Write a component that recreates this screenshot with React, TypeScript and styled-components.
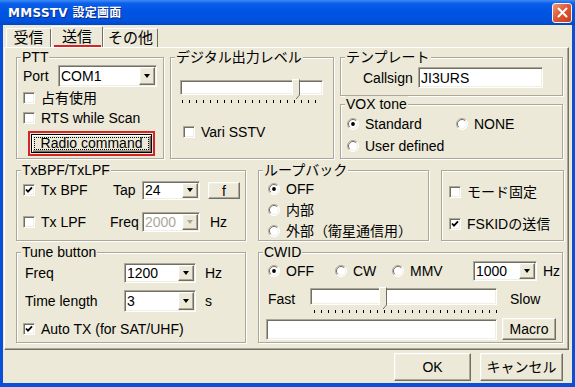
import React from 'react';
import styled, { createGlobalStyle, css } from 'styled-components';

const palette = {
  face: '#ece9d8',
  light: '#f1efe2',
  shadow: '#aca899',
  dark: '#716f64',
  white: '#ffffff',
  frame: '#0a4fd8',
  red: '#d42426',
};

const GlobalStyle = createGlobalStyle`
  html, body { margin: 0; padding: 0; }
  body {
    width: 575px;
    height: 387px;
    overflow: hidden;
    font-family: "Liberation Sans", "Noto Sans CJK JP", sans-serif;
    font-size: 14px;
    line-height: 16px;
    color: #000;
  }
  * { box-sizing: border-box; }
`;

const sunken = css`
  border: 1px solid;
  border-color: ${palette.shadow} ${palette.white} ${palette.white} ${palette.shadow};
  box-shadow: inset 1px 1px 0 ${palette.dark}, inset -1px -1px 0 ${palette.light};
  padding: 1px;
`;

const raised = css`
  border: 1px solid;
  border-color: ${palette.white} ${palette.dark} ${palette.dark} ${palette.white};
  box-shadow: inset -1px -1px 0 ${palette.shadow}, inset 1px 1px 0 ${palette.light};
`;

const Window = styled.div`
  width: 575px;
  height: 387px;
  display: flex;
  flex-direction: column;
  background: ${palette.frame};
`;

const TitleBar = styled.div`
  height: 25px;
  flex: none;
  display: flex;
  align-items: center;
  justify-content: space-between;
  padding: 0 3px 0 8px;
  background: linear-gradient(to bottom, #3d8cf7 0%, #0b5fe9 14%, #0054e3 45%, #0152dd 85%, #0046c4 100%);
`;

const Title = styled.span`
  color: #fff;
  font-family: "DejaVu Sans", "Noto Sans CJK JP", sans-serif;
  font-weight: bold;
  font-size: 12px;
  letter-spacing: 0.3px;
  text-shadow: 1px 1px 0 #0a2a8a;
`;

const CloseButton = styled.div`
  width: 20px;
  height: 20px;
  border: 1px solid #f4f4f4;
  border-radius: 3px;
  background: linear-gradient(135deg, #ec9a7c 0%, #df5a36 45%, #c83c18 100%);
  display: flex;
  align-items: center;
  justify-content: center;
`;

const Client = styled.div`
  flex: 1;
  margin: 0 3px 4px 3px;
  background: ${palette.face};
  display: flex;
  flex-direction: column;
`;

const TabStrip = styled.div`
  height: 22px;
  flex: none;
  display: flex;
  align-items: flex-end;
  padding-left: 3px;
`;

const Tab = styled.div<{ $active?: boolean; $w: number }>`
  position: relative;
  width: ${p => p.$w}px;
  height: ${p => (p.$active ? 21 : 19)}px;
  display: flex;
  align-items: center;
  justify-content: center;
  font-size: 15px;
  border-left: 1px solid ${palette.white};
  border-top: 1px solid ${palette.white};
  border-right: 1px solid ${palette.dark};
  border-radius: 2px 2px 0 0;
  ${p =>
    p.$active &&
    css`
      &::after {
        content: '';
        position: absolute;
        left: 2px;
        right: 1px;
        bottom: 0;
        height: 2px;
        background: ${palette.red};
      }
    `}
`;

const Panel = styled.div`
  flex: none;
  height: 303px;
  margin: 0 3px 0 1px;
  border: 1px solid;
  border-color: ${palette.white} ${palette.dark} ${palette.dark} ${palette.white};
  box-shadow: inset -1px -1px 0 ${palette.shadow};
  padding: 1px 0 0 11px;
  display: flex;
  flex-direction: column;
  gap: 3px;
`;

const Row = styled.div<{ $gap: number }>`
  display: flex;
  align-items: flex-start;
  gap: ${p => p.$gap}px;
`;

const Column = styled.div`
  display: flex;
  flex-direction: column;
`;

const Group = styled.fieldset<{ $w: number; $h: number }>`
  width: ${p => p.$w}px;
  height: ${p => p.$h}px;
  margin: 0;
  padding: 0;
  min-width: 0;
  border: 1px solid ${palette.shadow};
  box-shadow: inset 1px 1px 0 ${palette.white}, 1px 1px 0 ${palette.white};
  display: flex;
  flex-direction: column;
  flex: none;
`;

const Legend = styled.legend<{ $blank?: boolean }>`
  padding: 0 1px;
  margin-left: 4px;
  height: 16px;
  line-height: 16px;
  background: ${palette.face};
  white-space: nowrap;
  ${p => p.$blank && css`width: 0; padding: 0;`}
`;

const GroupBody = styled.div<{ $pl?: number }>`
  display: flex;
  flex-direction: column;
  padding-left: ${p => p.$pl ?? 6}px;
`;

const Line = styled.div<{ $h: number; $mt?: number; $ml?: number }>`
  display: flex;
  align-items: center;
  flex: none;
  height: ${p => p.$h}px;
  margin-top: ${p => p.$mt ?? 0}px;
  margin-left: ${p => p.$ml ?? 0}px;
`;

const Label = styled.span<{ $w?: number; $ml?: number }>`
  flex: none;
  white-space: nowrap;
  ${p => p.$w !== undefined && css`width: ${p.$w}px;`}
  margin-left: ${p => p.$ml ?? 0}px;
`;

const OptionWrap = styled.span<{ $w?: number }>`
  display: flex;
  align-items: center;
  gap: 6px;
  flex: none;
  white-space: nowrap;
  ${p => p.$w !== undefined && css`width: ${p.$w}px;`}
`;

const Box = styled.span`
  width: 12px;
  height: 12px;
  flex: none;
  background: #fff;
  border: 1px solid;
  border-color: ${palette.shadow} ${palette.white} ${palette.white} ${palette.shadow};
  box-shadow: inset 1px 1px 0 ${palette.dark}, inset -1px -1px 0 ${palette.light};
  display: flex;
  align-items: center;
  justify-content: center;
`;

const CheckBox: React.FC<{ checked?: boolean; w?: number; children: React.ReactNode }> = ({ checked, w, children }) => (
  <OptionWrap $w={w}>
    <Box>
      {checked && (
        <svg width="8" height="8" viewBox="0 0 8 8">
          <path d="M1 3.5 L3 5.6 L7 1.4" fill="none" stroke="#000" strokeWidth="1.8" />
        </svg>
      )}
    </Box>
    <span>{children}</span>
  </OptionWrap>
);

const RadioOption: React.FC<{ checked?: boolean; w?: number; children: React.ReactNode }> = ({ checked, w, children }) => (
  <OptionWrap $w={w}>
    <svg width="12" height="12" viewBox="0 0 12 12" style={{ flex: 'none' }}>
      <circle cx="6" cy="6" r="5.5" fill="#fff" />
      <path d="M2.1 9.9 A5.5 5.5 0 0 1 9.9 2.1" fill="none" stroke={palette.shadow} strokeWidth="1" />
      <path d="M2.8 9.2 A4.5 4.5 0 0 1 9.2 2.8" fill="none" stroke={palette.dark} strokeWidth="1" />
      <path d="M9.9 2.1 A5.5 5.5 0 0 1 2.1 9.9" fill="none" stroke={palette.white} strokeWidth="1" />
      <path d="M9.2 2.8 A4.5 4.5 0 0 1 2.8 9.2" fill="none" stroke={palette.light} strokeWidth="1" />
      {checked && <circle cx="6" cy="6" r="1.9" fill="#000" />}
    </svg>
    <span>{children}</span>
  </OptionWrap>
);

const Combo = styled.div<{ $w: number; $h: number }>`
  ${sunken}
  width: ${p => p.$w}px;
  height: ${p => p.$h}px;
  flex: none;
  display: flex;
  background: #fff;
`;

const ComboText = styled.span<{ $disabled?: boolean }>`
  flex: 1;
  display: flex;
  align-items: center;
  padding-left: 1px;
  color: ${p => (p.$disabled ? palette.shadow : '#000')};
`;

const DropButton = styled.span`
  ${raised}
  width: 16px;
  flex: none;
  background: ${palette.face};
  display: flex;
  align-items: center;
  justify-content: center;
`;

const Arrow = styled.span<{ $disabled?: boolean }>`
  width: 0;
  height: 0;
  border-left: 3.5px solid transparent;
  border-right: 3.5px solid transparent;
  border-top: 4px solid ${p => (p.$disabled ? palette.shadow : '#000')};
`;

const ComboBox: React.FC<{ w: number; h: number; value: string; disabled?: boolean }> = ({ w, h, value, disabled }) => (
  <Combo $w={w} $h={h}>
    <ComboText $disabled={disabled}>{value}</ComboText>
    <DropButton>
      <Arrow $disabled={disabled} />
    </DropButton>
  </Combo>
);

const TextField = styled.div<{ $w: number; $h: number; $ml?: number }>`
  ${sunken}
  width: ${p => p.$w}px;
  height: ${p => p.$h}px;
  margin-left: ${p => p.$ml ?? 0}px;
  flex: none;
  background: #fff;
  display: flex;
  align-items: center;
  padding-left: 2px;
`;

const Button = styled.button<{ $w: number; $h: number; $ml?: number }>`
  ${raised}
  width: ${p => p.$w}px;
  height: ${p => p.$h}px;
  margin-left: ${p => p.$ml ?? 0}px;
  flex: none;
  padding: 0;
  font: inherit;
  color: #000;
  background: ${palette.face};
`;

const Highlight = styled.div`
  border: 2px solid ${palette.red};
  padding: 1px;
  display: flex;
`;

const DefaultButton = styled.button`
  width: 121px;
  height: 19px;
  padding: 2px;
  font: inherit;
  background: ${palette.face};
  border: 1px solid #000;
  box-shadow: inset 1px 1px 0 ${palette.white}, inset -1px -1px 0 ${palette.dark}, inset -2px -2px 0 ${palette.shadow};
  display: flex;
`;

const FocusRect = styled.span`
  flex: 1;
  border: 1px dotted #000;
  display: flex;
  align-items: center;
  justify-content: center;
  line-height: 13px;
`;

const SliderBox = styled.div<{ $w: number; $mt?: number; $ml?: number }>`
  position: relative;
  width: ${p => p.$w}px;
  margin-top: ${p => p.$mt ?? 0}px;
  margin-left: ${p => p.$ml ?? 0}px;
  flex: none;
`;

const Channel = styled.div<{ $h: number }>`
  ${sunken}
  height: ${p => p.$h}px;
  background: #fff;
`;

const Ticks = styled.div<{ $w: number; $ml: number }>`
  width: ${p => p.$w}px;
  height: 3px;
  margin-top: 5px;
  margin-left: ${p => p.$ml}px;
  background: repeating-linear-gradient(to right, #000 0 1px, transparent 1px 7px);
`;

const ThumbSvg = styled.svg`
  position: absolute;
  top: -1px;
`;

const Slider: React.FC<{ w: number; h: number; value: number; ticks: number; tickMl: number; mt?: number; ml?: number }> = ({
  w,
  h,
  value,
  ticks,
  tickMl,
  mt,
  ml,
}) => (
  <SliderBox $w={w} $mt={mt} $ml={ml}>
    <Channel $h={h} />
    <Ticks $w={ticks * 7 + 1} $ml={tickMl} />
    <ThumbSvg width="9" height={h + 6} viewBox={`0 0 9 ${h + 6}`} style={{ left: value * w - 4 }}>
      <polygon points={`0.5,0.5 7.5,0.5 7.5,${h + 1} 4,${h + 5} 0.5,${h + 1}`} fill={palette.face} />
      <polyline points={`0.5,${h + 1} 0.5,0.5 7.5,0.5`} fill="none" stroke={palette.white} />
      <polyline points={`7.5,0.5 7.5,${h + 1} 4,${h + 5}`} fill="none" stroke={palette.dark} />
    </ThumbSvg>
  </SliderBox>
);

const ButtonBar = styled.div`
  flex: 1;
  display: flex;
  justify-content: flex-end;
  align-items: flex-start;
  gap: 9px;
  padding: 3px 9px 0 0;
`;

const App: React.FC = () => (
  <>
    <GlobalStyle />
    <Window>
      <TitleBar>
        <Title>MMSSTV 設定画面</Title>
        <CloseButton>
          <svg width="11" height="11" viewBox="0 0 11 11">
            <path d="M1.5 1.5 L9.5 9.5 M9.5 1.5 L1.5 9.5" stroke="#fff" strokeWidth="2" strokeLinecap="round" />
          </svg>
        </CloseButton>
      </TitleBar>
      <Client>
        <TabStrip>
          <Tab $w={45}>受信</Tab>
          <Tab $w={52} $active>
            送信
          </Tab>
          <Tab $w={55}>その他</Tab>
        </TabStrip>
        <Panel>
          <Row $gap={6}>
            <Group $w={148} $h={110}>
              <Legend>PTT</Legend>
              <GroupBody>
                <Line $h={22}>
                  <Label $w={35}>Port</Label>
                  <ComboBox w={99} h={22} value="COM1" />
                </Line>
                <Line $h={20} $mt={1}>
                  <CheckBox>占有使用</CheckBox>
                </Line>
                <Line $h={20}>
                  <CheckBox>RTS while Scan</CheckBox>
                </Line>
                <Line $h={25} $mt={3} $ml={5}>
                  <Highlight>
                    <DefaultButton>
                      <FocusRect>Radio command</FocusRect>
                    </DefaultButton>
                  </Highlight>
                </Line>
              </GroupBody>
            </Group>
            <Group $w={164} $h={110}>
              <Legend>デジタル出力レベル</Legend>
              <GroupBody $pl={9}>
                <Slider w={143} h={15} value={0.81} ticks={19} tickMl={2} mt={15} />
                <Line $h={20} $mt={19} $ml={3}>
                  <CheckBox>Vari SSTV</CheckBox>
                </Line>
              </GroupBody>
            </Group>
            <Column>
              <Group $w={223} $h={47}>
                <Legend>テンプレート</Legend>
                <GroupBody $pl={22}>
                  <Line $h={21} $mt={2}>
                    <Label $w={55}>Callsign</Label>
                    <TextField $w={125} $h={21}>
                      JI3URS
                    </TextField>
                  </Line>
                </GroupBody>
              </Group>
              <Group $w={223} $h={63}>
                <Legend>VOX tone</Legend>
                <GroupBody>
                  <Line $h={24}>
                    <RadioOption checked w={109}>
                      Standard
                    </RadioOption>
                    <RadioOption>NONE</RadioOption>
                  </Line>
                  <Line $h={20}>
                    <RadioOption>User defined</RadioOption>
                  </Line>
                </GroupBody>
              </Group>
            </Column>
          </Row>
          <Row $gap={12}>
            <Group $w={230} $h={79}>
              <Legend>TxBPF/TxLPF</Legend>
              <GroupBody>
                <Line $h={24}>
                  <CheckBox checked w={90}>
                    Tx BPF
                  </CheckBox>
                  <Label $w={29}>Tap</Label>
                  <ComboBox w={58} h={19} value="24" />
                  <Button $w={32} $h={17} $ml={8}>
                    f
                  </Button>
                </Line>
                <Line $h={24} $mt={8}>
                  <CheckBox w={87}>Tx LPF</CheckBox>
                  <Label $w={32}>Freq</Label>
                  <ComboBox w={58} h={20} value="2000" disabled />
                  <Label $ml={10}>Hz</Label>
                </Line>
              </GroupBody>
            </Group>
            <Group $w={171} $h={79}>
              <Legend>ループバック</Legend>
              <GroupBody $pl={9}>
                <Line $h={21}>
                  <RadioOption checked>OFF</RadioOption>
                </Line>
                <Line $h={21}>
                  <RadioOption>内部</RadioOption>
                </Line>
                <Line $h={21}>
                  <RadioOption>外部（衛星通信用）</RadioOption>
                </Line>
              </GroupBody>
            </Group>
            <Group $w={123} $h={79}>
              <Legend $blank />
              <GroupBody $pl={7}>
                <Line $h={28}>
                  <CheckBox>モード固定</CheckBox>
                </Line>
                <Line $h={20} $mt={8}>
                  <CheckBox checked>FSKIDの送信</CheckBox>
                </Line>
              </GroupBody>
            </Group>
          </Row>
          <Row $gap={12}>
            <Group $w={230} $h={99}>
              <Legend>Tune button</Legend>
              <GroupBody>
                <Line $h={22} $mt={2}>
                  <Label $w={99} $ml={2}>
                    Freq
                  </Label>
                  <ComboBox w={72} h={20} value="1200" />
                  <Label $ml={9}>Hz</Label>
                </Line>
                <Line $h={22} $mt={6}>
                  <Label $w={99} $ml={2}>
                    Time length
                  </Label>
                  <ComboBox w={72} h={22} value="3" />
                  <Label $ml={9}>s</Label>
                </Line>
                <Line $h={20} $mt={7}>
                  <CheckBox checked>Auto TX (for SAT/UHF)</CheckBox>
                </Line>
              </GroupBody>
            </Group>
            <Group $w={305} $h={99}>
              <Legend>CWID</Legend>
              <GroupBody $pl={9}>
                <Line $h={22}>
                  <RadioOption checked w={67}>
                    OFF
                  </RadioOption>
                  <RadioOption w={57}>CW</RadioOption>
                  <RadioOption w={81}>MMV</RadioOption>
                  <ComboBox w={64} h={20} value="1000" />
                  <Label $ml={6}>Hz</Label>
                </Line>
                <Line $h={24} $mt={5}>
                  <Label $w={42}>Fast</Label>
                  <Slider w={187} h={17} value={0.39} ticks={26} tickMl={4} mt={3} />
                  <Label $ml={13}>Slow</Label>
                </Line>
                <Line $h={22} $mt={7} $ml={-2}>
                  <TextField $w={231} $h={21} />
                  <Button $w={54} $h={22} $ml={5}>
                    Macro
                  </Button>
                </Line>
              </GroupBody>
            </Group>
          </Row>
        </Panel>
        <ButtonBar>
          <Button $w={77} $h={28}>
            OK
          </Button>
          <Button $w={83} $h={28}>
            キャンセル
          </Button>
        </ButtonBar>
      </Client>
    </Window>
  </>
);

export default App;
